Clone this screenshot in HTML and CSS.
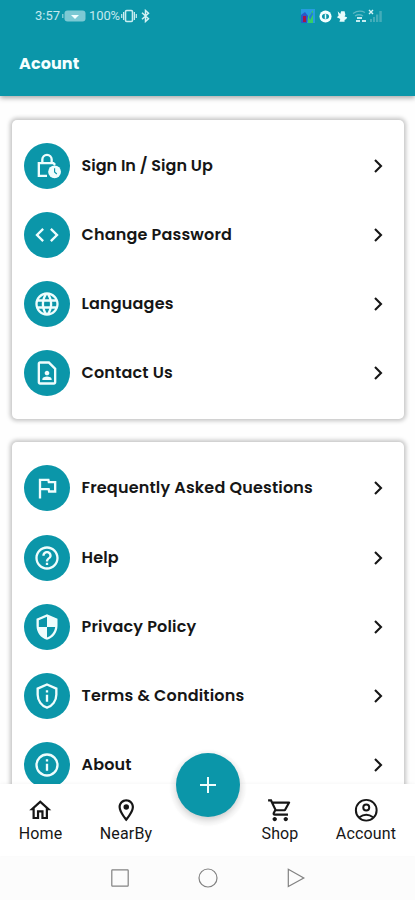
FILE: index.html
```html
<!DOCTYPE html>
<html lang="en">
<head>
<meta charset="utf-8">
<title>Acount</title>
<link rel="stylesheet" href="styles.css">
</head>
<body>
<div class="screen">
  <header class="header">
    <div class="status">
      <div class="status-left">
        <span class="clock">3:57</span>
        <svg class="battery" viewBox="0 0 24 12"><rect x="2.5" y=".5" width="21" height="11" rx="3" fill="#7cc9d4"/><rect x="0" y="4" width="1.5" height="4" fill="#7cc9d4"/><path d="M9 5h8l-4 4z" fill="#f2ffff"/></svg>
        <span class="percent">100%</span>
        <svg class="vibrate" viewBox="0 0 16 14"><rect x="4.5" y="1.5" width="7" height="11" rx="1.2" fill="none" stroke="#c9edf1" stroke-width="1.6"/><path d="M2.6 3v8M13.4 3v8M.7 5v4M15.3 5v4" stroke="#c9edf1" stroke-width="1.2"/></svg>
        <svg class="bluetooth" viewBox="0 0 9 14"><path d="M1 3.8l6.5 6L4.5 12.500V1.500l3 2.700L1 10.200" fill="none" stroke="#d4f1f4" stroke-width="1.5"/></svg>
      </div>
      <div class="status-right">
        <svg viewBox="0 0 14 14" width="14" height="14"><rect width="14" height="14" fill="#269ce0"/><path d="M0 14V6l4-3 3 4-1 7z" fill="#2a59c8"/><path d="M7 14V8l5-7v13z" fill="#35cf65"/><path d="M8 8l3-5 1 2-3 6z" fill="#217ad7"/><path d="M2 7h3v6H2z" fill="#a31745"/></svg>
        <svg viewBox="0 0 14 14" width="13" height="13"><circle cx="7" cy="7" r="6.500" fill="#f3ffff"/><ellipse cx="7" cy="7" rx="3.800" ry="3" fill="#0b96a9"/><path d="M7 4.500v5" stroke="#f3ffff" stroke-width="1.600"/></svg>
        <svg viewBox="0 0 14 14" width="12" height="13"><path d="M2 1l3 3 1-3h4l1 4-1 2 3 1-1 2-2 1v2H4l1-3-4-2 2-2z" fill="#e5fbfb"/></svg>
        <svg viewBox="0 0 15 14" width="15" height="14"><path d="M1 4.500q6-4 12-1M3 7q4-2.500 8 0" fill="none" stroke="#5db8c4" stroke-width="1.300"/><path d="M5 9h5M4 12h4M10 12h4" stroke="#c4ecf0" stroke-width="1.800"/></svg>
        <svg class="signal" viewBox="0 0 15 14" width="15" height="14"><path d="M1 1l4 4M5 1L1 5" stroke="#d4f3f6" stroke-width="1.400"/><path d="M2 13v-3h2v3zM5 13V8h2v5zM8 13V5.500h2.300V13zM11.300 13V2h2.500v11z" fill="#43adba"/></svg>
      </div>
    </div>
    <h1 class="title">Acount</h1>
  </header>

  <main class="content">
    <section class="card">
      <div class="row"><span class="badge"><svg viewBox="0 0 24 24"><path d="M12 20.500H5V9.500h12.500l1.500 1.500M8 9V6.500a4 4 0 0 1 8 0V9" fill="none" stroke="currentColor" stroke-width="2"/><circle cx="18.500" cy="17" r="5.500"/><path d="M18.500 14v3.200l1.900 1.600" fill="none" stroke="#0b96a9" stroke-width="1"/></svg></span><span class="label label-tight">Sign In / Sign Up</span><svg class="chevron" viewBox="0 0 10 16"><path d="M2 2l6 6-6 6"/></svg></div>
      <div class="row"><span class="badge"><svg viewBox="0 0 24 24"><path d="M9.400 16.600L4.800 12l4.600-4.600L8 6l-6 6 6 6 1.400-1.400zm5.200 0l4.600-4.600-4.600-4.600L16 6l6 6-6 6-1.400-1.400z"/></svg></span><span class="label">Change Password</span><svg class="chevron" viewBox="0 0 10 16"><path d="M2 2l6 6-6 6"/></svg></div>
      <div class="row"><span class="badge"><svg viewBox="0 0 24 24"><path d="M11.990 2C6.470 2 2 6.480 2 12s4.470 10 9.990 10C17.520 22 22 17.520 22 12S17.520 2 11.990 2zm6.930 6h-2.950c-.32-1.250-.78-2.450-1.380-3.560 1.840.63 3.370 1.910 4.330 3.560zM12 4.040c.83 1.200 1.480 2.530 1.910 3.960h-3.820c.43-1.430 1.080-2.760 1.910-3.960zM4.260 14C4.100 13.360 4 12.690 4 12s.1-1.360.26-2h3.380c-.08.66-.14 1.320-.14 2 0 .68.06 1.340.14 2H4.260zm.82 2h2.950c.32 1.250.78 2.450 1.380 3.560-1.840-.63-3.370-1.900-4.330-3.560zm2.950-8H5.080c.96-1.660 2.490-2.930 4.330-3.560C8.810 5.550 8.350 6.750 8.030 8zM12 19.960c-.83-1.200-1.480-2.530-1.910-3.960h3.820c-.43 1.430-1.080 2.760-1.910 3.960zM14.340 14H9.660c-.09-.66-.16-1.320-.16-2 0-.68.07-1.350.16-2h4.680c.09.65.16 1.320.16 2 0 .68-.07 1.340-.16 2zm.25 5.560c.6-1.110 1.060-2.310 1.380-3.560h2.950c-.96 1.650-2.490 2.930-4.330 3.560zM16.360 14c.08-.66.14-1.320.14-2 0-.68-.06-1.340-.14-2h3.380c.16.64.26 1.310.26 2s-.1 1.360-.26 2h-3.380z"/></svg></span><span class="label">Languages</span><svg class="chevron" viewBox="0 0 10 16"><path d="M2 2l6 6-6 6"/></svg></div>
      <div class="row"><span class="badge"><svg viewBox="0 0 24 24"><path d="M13.170 4L18 8.830V20H6V4h7.170M14 2H6c-1.100 0-2 .9-2 2v16c0 1.100.9 2 2 2h12c1.100 0 2-.9 2-2V8l-6-6zm-2 12c1.100 0 2-.9 2-2s-.9-2-2-2-2 .9-2 2 .9 2 2 2zm4 3.430c0-.81-.48-1.530-1.220-1.850a6.950 6.950 0 0 0-5.560 0A2.010 2.010 0 0 0 8 17.430V18h8v-.57z"/></svg></span><span class="label">Contact Us</span><svg class="chevron" viewBox="0 0 10 16"><path d="M2 2l6 6-6 6"/></svg></div>
    </section>
    <section class="card">
      <div class="row"><span class="badge"><svg viewBox="0 0 24 24"><path d="M12.360 6l.4 2H18v6h-3.360l-.4-2H7V6h5.360M14 4H5v17h2v-7h5.600l.4 2h7V6h-5.600L14 4z"/></svg></span><span class="label">Frequently Asked Questions</span><svg class="chevron" viewBox="0 0 10 16"><path d="M2 2l6 6-6 6"/></svg></div>
      <div class="row"><span class="badge"><svg viewBox="0 0 24 24"><path d="M11 18h2v-2h-2v2zm1-16C6.480 2 2 6.480 2 12s4.480 10 10 10 10-4.480 10-10S17.520 2 12 2zm0 18c-4.410 0-8-3.590-8-8s3.590-8 8-8 8 3.590 8 8-3.590 8-8 8zm0-14c-2.210 0-4 1.790-4 4h2c0-1.100.9-2 2-2s2 .9 2 2c0 2-3 1.750-3 5h2c0-2.250 3-2.500 3-5 0-2.210-1.790-4-4-4z"/></svg></span><span class="label">Help</span><svg class="chevron" viewBox="0 0 10 16"><path d="M2 2l6 6-6 6"/></svg></div>
      <div class="row"><span class="badge"><svg viewBox="0 0 24 24"><path d="M12 1L3 5v6c0 5.550 3.840 10.740 9 12 5.160-1.260 9-6.450 9-12V5l-9-4zm0 10.990h7c-.53 4.120-3.280 7.790-7 8.940V12H5V6.300l7-3.110v8.800z"/></svg></span><span class="label">Privacy Policy</span><svg class="chevron" viewBox="0 0 10 16"><path d="M2 2l6 6-6 6"/></svg></div>
      <div class="row"><span class="badge"><svg viewBox="0 0 24 24"><path d="M12 2.100l8 3.550V11c0 5-3.400 9.700-8 11-4.600-1.300-8-6-8-11V5.650z" fill="none" stroke="currentColor" stroke-width="2"/><path d="M11 7h2v2h-2zM11 11h2v6h-2z"/></svg></span><span class="label">Terms &amp; Conditions</span><svg class="chevron" viewBox="0 0 10 16"><path d="M2 2l6 6-6 6"/></svg></div>
      <div class="row"><span class="badge"><svg viewBox="0 0 24 24"><circle cx="12" cy="12" r="9" fill="none" stroke="currentColor" stroke-width="2"/><path d="M11 7h2v2h-2zM11 11h2v6h-2z"/></svg></span><span class="label">About</span><svg class="chevron" viewBox="0 0 10 16"><path d="M2 2l6 6-6 6"/></svg></div>
    </section>
  </main>

  <nav class="tabs">
    <div class="tab"><svg viewBox="0 0 24 24"><path d="M12 5.690l5 4.500V18h-2v-6H9v6H7v-7.810l5-4.500M12 3L2 12h3v8h6v-6h2v6h6v-8h3L12 3z"/></svg><span>Home</span></div>
    <div class="tab"><svg viewBox="0 0 24 24"><path d="M12 2C8.130 2 5 5.130 5 9c0 5.250 7 13 7 13s7-7.750 7-13c0-3.870-3.130-7-7-7zM7 9c0-2.760 2.240-5 5-5s5 2.240 5 5c0 2.880-2.880 7.190-5 9.880C9.920 16.210 7 11.850 7 9z"/><circle cx="12" cy="9" r="2.500"/></svg><span>NearBy</span></div>
    <div class="gap"></div>
    <div class="tab"><svg viewBox="0 0 24 24"><path d="M15.550 13c.75 0 1.410-.41 1.750-1.030l3.580-6.490A.996.996 0 0 0 20.010 4H5.210l-.94-2H1v2h2l3.600 7.590-1.350 2.440C4.520 15.370 5.480 17 7 17h12v-2H7l1.100-2h7.450zM6.160 6h12.150l-2.760 5H8.530L6.160 6zM7 18c-1.100 0-1.990.9-1.990 2S5.900 22 7 22s2-.9 2-2-.9-2-2-2zm10 0c-1.100 0-1.990.9-1.990 2s.89 2 1.990 2 2-.9 2-2-.9-2-2-2z"/></svg><span>Shop</span></div>
    <div class="tab"><svg viewBox="0 0 24 24" stroke="#161616" stroke-width="1.800"><circle cx="12" cy="12" r="9.400"/><circle cx="12" cy="9.500" r="2.700"/><path d="M5.800 18.300q6.200-4.600 12.400 0"/></svg><span>Account</span></div>
    <div class="fab"><svg viewBox="0 0 18 18"><path d="M9 1v16M1 9h16"/></svg></div>
  </nav>

  <div class="system">
    <svg viewBox="0 0 20 20"><rect x="1.800" y="1.800" width="16.400" height="16.400" rx=".6"/></svg>
    <svg viewBox="0 0 20 20"><circle cx="10" cy="10" r="9"/></svg>
    <svg viewBox="0 0 20 20"><path d="M2.300 1.300v17.200L17.800 9.900z"/></svg>
  </div>
</div>
</body>
</html>
```
FILE: styles.css
```css
* { box-sizing: border-box; }

body {
  margin: 0;
  background: #fefefe;
  font-family: Poppins, Inter, sans-serif;
  color: #161616;
}

svg { display: block; flex: none; }

.screen {
  width: 415px;
  height: 900px;
  display: flex;
  flex-direction: column;
  overflow: hidden;
}

.header {
  flex: none;
  height: 96px;
  background: #0b96a9;
  box-shadow: 0 2px 5px rgba(0, 0, 0, .35);
  z-index: 1;
}

.status {
  display: flex;
  justify-content: space-between;
  height: 32px;
  padding: 0 32.500px 0 35px;
  align-items: center;
}

.status-left {
  display: flex;
  align-items: center;
  font: 13px/16px Roboto, sans-serif;
  color: #c3e9ee;
}

.clock { width: 27px; }
.battery { width: 24px; height: 12px; }
.percent { width: 32px; margin-left: 3px; letter-spacing: -.1px; }
.vibrate { width: 16px; height: 14px; }
.bluetooth { width: 9px; height: 14px; margin-left: 4px; }

.status-right { display: flex; align-items: center; gap: 4px; }
.signal { margin-left: -3px; }

.title {
  margin: 20px 0 0 19px;
  font-size: 16px;
  line-height: 24px;
  font-weight: 700;
  letter-spacing: .1px;
  color: #f6ffff;
}

.content {
  flex: 1;
  min-height: 0;
  padding: 24px 11.500px 0 11.500px;
  overflow: hidden;
}

.card {
  padding: 11px 20.500px 11px 12px;
  border-radius: 5px;
  background: #fff;
  box-shadow: 0 0 4px 1.500px rgba(0, 0, 0, .23);
  margin-bottom: 23px;
}

.card + .card { padding-top: 12px; }

.row { display: flex; align-items: center; height: 69.200px; }

.badge {
  flex: none;
  display: grid;
  place-items: center;
  width: 46px;
  height: 46px;
  border-radius: 50%;
  background: #0b96a9;
  color: #effdfd;
}

.badge svg { width: 28px; height: 28px; fill: currentColor; }

.label {
  flex: 1;
  margin-left: 12px;
  font-size: 16px;
  line-height: 24px;
  font-weight: 600;
  letter-spacing: .18px;
  white-space: nowrap;
}

.label-tight { letter-spacing: 0; }

.chevron {
  width: 10px;
  height: 16px;
  fill: none;
  stroke: #161616;
  stroke-width: 2.100;
}

.tabs {
  flex: none;
  position: relative;
  display: flex;
  height: 72px;
  padding-top: 13px;
  background: #fff;
  box-shadow: 0 -1px 3px rgba(0, 0, 0, .03);
  font-family: Roboto, sans-serif;
  font-size: 16px;
  line-height: 20px;
  letter-spacing: .15px;
}

.tab { display: flex; flex-direction: column; align-items: center; width: 81px; }
.tab:nth-child(2) { width: 90px; }
.tab:nth-child(4) { width: 76px; }
.tab:nth-child(5) { width: 96px; }
.gap { width: 71px; }
.tab svg { width: 26.500px; height: 26.500px; fill: #161616; }
.tab:nth-child(5) svg { fill: none; }

.fab {
  position: absolute;
  left: 175.500px;
  top: -31px;
  width: 64px;
  height: 64px;
  display: grid;
  place-items: center;
  border-radius: 50%;
  background: #0b96a9;
  box-shadow: 0 3px 7px rgba(0, 0, 0, .2), 0 3px 0 6px rgba(0, 0, 0, .012);
}

.fab svg { width: 18px; height: 18px; stroke: #effdfd; stroke-width: 2; }

.system {
  flex: none;
  display: flex;
  justify-content: center;
  align-items: center;
  gap: 68px;
  height: 44px;
  background: #fcfcfc;
}

.system svg { width: 20px; height: 20px; fill: none; stroke: #828282; stroke-width: 1.200; }
```
